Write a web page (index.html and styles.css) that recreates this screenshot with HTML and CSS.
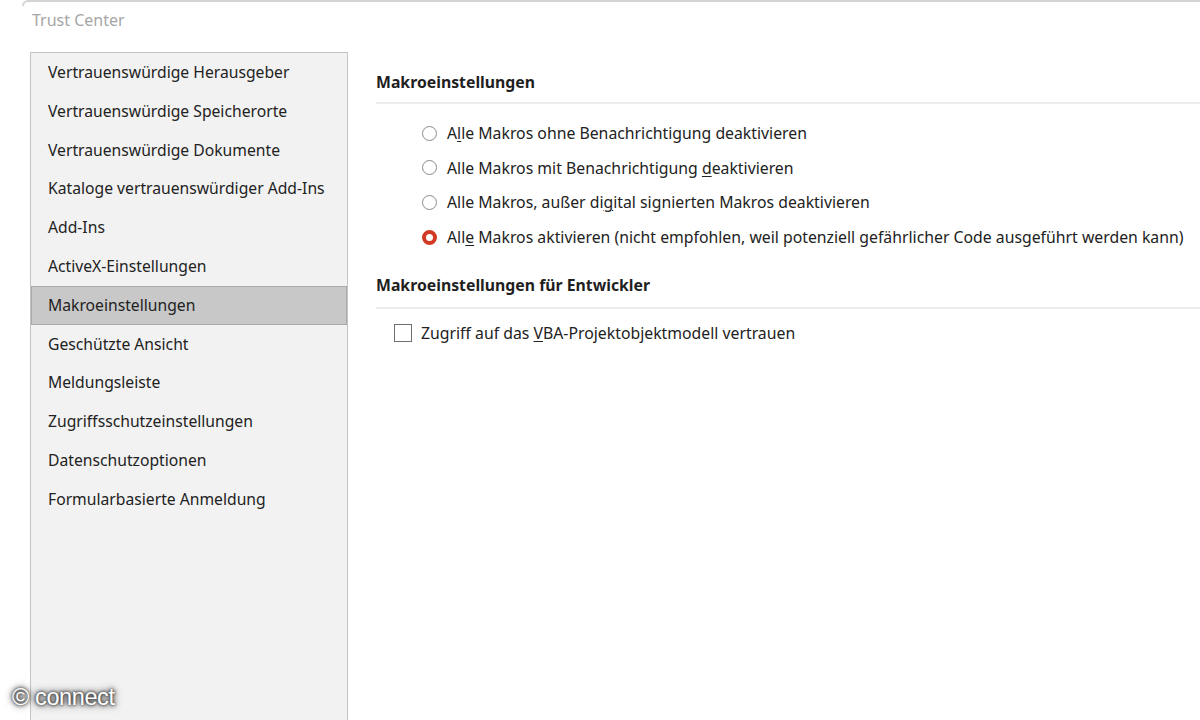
FILE: index.html
```html
<!DOCTYPE html>
<html lang="de">
<head>
<meta charset="utf-8">
<title>Trust Center</title>
<link rel="stylesheet" href="styles.css">
</head>
<body>
<div class="page">
  <div class="frame-edge"></div>
  <div class="title">Trust Center</div>
  <div class="main">
    <nav class="sidebar">
      <div class="item">Vertrauenswürdige Herausgeber</div>
      <div class="item">Vertrauenswürdige Speicherorte</div>
      <div class="item">Vertrauenswürdige Dokumente</div>
      <div class="item">Kataloge vertrauenswürdiger Add-Ins</div>
      <div class="item">Add-Ins</div>
      <div class="item">ActiveX-Einstellungen</div>
      <div class="item selected">Makroeinstellungen</div>
      <div class="item">Geschützte Ansicht</div>
      <div class="item">Meldungsleiste</div>
      <div class="item">Zugriffsschutzeinstellungen</div>
      <div class="item">Datenschutzoptionen</div>
      <div class="item">Formularbasierte Anmeldung</div>
    </nav>
    <section class="content">
      <h2 class="heading">Makroeinstellungen</h2>
      <div class="options">
        <div class="option"><span class="radio"></span><span>A<u>l</u>le Makros ohne Benachrichtigung deaktivieren</span></div>
        <div class="option"><span class="radio"></span><span>Alle Makros mit Benachrichtigung <u>d</u>eaktivieren</span></div>
        <div class="option"><span class="radio"></span><span>Alle Makros, außer di<u>g</u>ital signierten Makros deaktivieren</span></div>
        <div class="option"><span class="radio checked"></span><span>All<u>e</u> Makros aktivieren (nicht empfohlen, weil potenziell gefährlicher Code ausgeführt werden kann)</span></div>
      </div>
      <h2 class="heading heading-2">Makroeinstellungen für Entwickler</h2>
      <div class="check-row"><span class="checkbox"></span><span>Zugriff auf das <u>V</u>BA-Projektobjektmodell vertrauen</span></div>
    </section>
  </div>
  <div class="watermark">© connect</div>
</div>
</body>
</html>
```
FILE: styles.css
```css
html, body {
  margin: 0;
  padding: 0;
  background: #ffffff;
}
.page {
  position: relative;
  width: 1200px;
  height: 720px;
  overflow: hidden;
  font-family: "Noto Sans", "Open Sans", sans-serif;
  color: #222222;
}
.frame-edge {
  margin-left: 22px;
  height: 6px;
  border-top: 2px solid #d4d4d4;
  border-left: 2px solid #d4d4d4;
  border-top-left-radius: 8px;
  box-sizing: border-box;
}
.title {
  margin: 2px 0 0 32px;
  height: 24px;
  line-height: 24px;
  font-size: 16px;
  color: #a6a6a6;
}
.main {
  display: flex;
  margin-top: 20px;
}
.sidebar {
  margin-left: 30px;
  width: 318px;
  height: 700px;
  box-sizing: border-box;
  background: #f2f2f2;
  border: 1px solid #c4c4c4;
  border-bottom: none;
  flex: none;
}
.item {
  height: 38.8px;
  line-height: 36px;
  padding-left: 16px;
  font-size: 15.7px;
  box-sizing: border-box;
  border: 1px solid transparent;
  white-space: nowrap;
}
.item.selected {
  background: #c8c8c8;
  border-color: #a9a9a9;
}
.content {
  flex: 1;
  margin-left: 28px;
  padding-top: 18px;
}
.heading {
  margin: 0;
  font-size: 15.8px;
  font-weight: 700;
  line-height: 24px;
  padding-bottom: 8px;
  border-bottom: 2px solid #ececec;
  color: #1f1f1f;
}
.options {
  padding: 12px 0 0 46px;
}
.option {
  display: flex;
  align-items: center;
  height: 34.6px;
  font-size: 15.8px;
  white-space: nowrap;
}
.radio {
  width: 15px;
  height: 15px;
  box-sizing: border-box;
  border: 1.5px solid #8a8a8a;
  border-radius: 50%;
  margin-right: 10px;
  flex: none;
  background: #fff;
}
.radio.checked {
  border: 4.5px solid #d13a24;
}
.heading-2 {
  margin-top: 19px;
  padding-bottom: 10px;
}
.check-row {
  display: flex;
  align-items: center;
  margin: 13px 0 0 18px;
  font-size: 15.8px;
  white-space: nowrap;
}
.checkbox {
  width: 18px;
  height: 18px;
  box-sizing: border-box;
  border: 1.5px solid #6e6e6e;
  margin-right: 9px;
  flex: none;
  background: #fff;
}
u {
  text-decoration-thickness: 1px;
  text-underline-offset: 2px;
}
.watermark {
  position: absolute;
  left: 12px;
  top: 684px;
  font-family: "Liberation Sans", Arial, sans-serif;
  font-size: 23.5px;
  letter-spacing: -0.4px;
  color: #ffffff;
  text-shadow: 0 0 3px #222, 0 0 5px #333, 0 0 8px #555;
}
```
